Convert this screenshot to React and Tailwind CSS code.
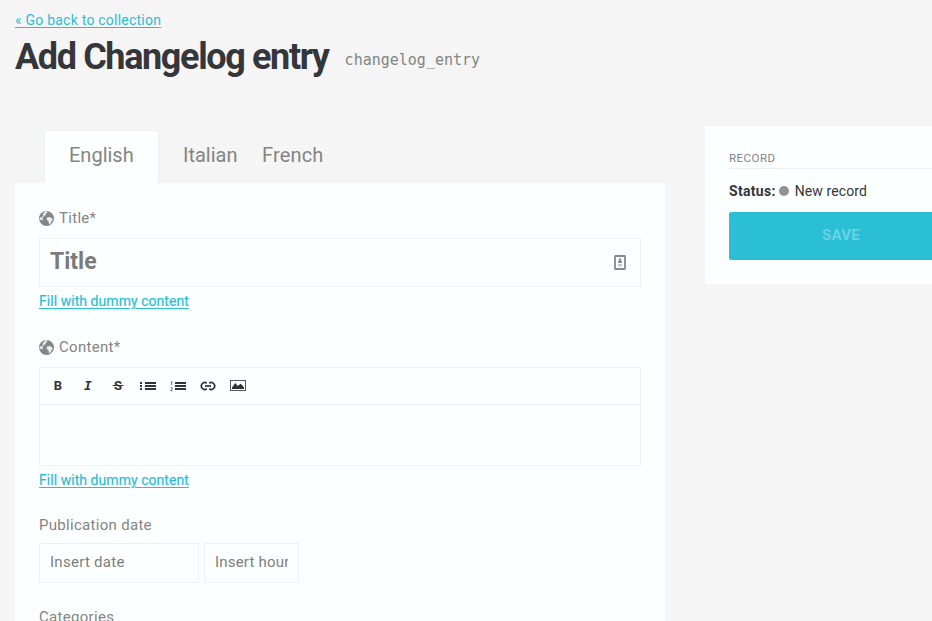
import React from "react";

const STROKE = "#2f3236";

function Globe() {
  return (
    <svg className="mr-[5px]" width="15" height="15" viewBox="0 0 15 15">
      <circle cx="7.5" cy="7.5" r="7.5" fill="#848689" />
      <path d="M5.2 0.9 L7.4 1.5 L6.6 2.6 L8.3 3.1 L7.2 4.6 L5.6 5 L5.2 6.3 L7.4 8 L7.1 9.7 L5.6 11.2 L5.1 13.9 L3.9 13.3 L3.6 10.4 L1.8 8.2 L1.6 5.4 L3.6 4 L4 2.4 Z" fill="#848689" />
      <path d="M6 0.5 L8.6 0.6 L8.2 1.8 L6.7 2.6 L6.9 3.9 L5 4.7 L4.4 6.3 L2.7 6.7 L4.1 8.1 L3.9 9.4 L2 8.5 L0.8 9.6 L0.6 7.5 L2.3 4.3 L4.6 2.5 Z" fill="#eef1f1" />
      <path d="M8.1 6.5 L11.2 5.9 L12.8 7.6 L13.9 8 L12.7 10.1 L11.6 12.6 L10.1 13.2 L9.5 10.2 L7.6 8.7 Z" fill="#eef1f1" />
      <path d="M1.2 4 L3.6 2.8 L4.2 4.4 L2.6 6.2 L0.8 6.6 Z" fill="#848689" />
    </svg>
  );
}

function ListIcon({ ordered }) {
  return (
    <svg width="16" height="11" viewBox="0 0 16 11" fill={STROKE} shapeRendering="crispEdges">
      {ordered ? (
        <g stroke={STROKE} strokeWidth="0.7" fill="none" shapeRendering="auto">
          <path d="M0.8 1.2 L1.8 0.6 V4" />
          <path d="M0.6 7 Q1.7 6 2.4 7 Q2.5 8 0.7 9.8 H2.6" />
        </g>
      ) : (
        <g>
          <rect x="0" y="1" width="2" height="2" />
          <rect x="0" y="4" width="2" height="2" />
          <rect x="0" y="7" width="2" height="2" />
        </g>
      )}
      <rect x="5" y="1" width="11" height="2" />
      <rect x="5" y="4" width="11" height="2" />
      <rect x="5" y="7" width="11" height="2" />
    </svg>
  );
}

function LinkIcon() {
  return (
    <svg width="16" height="10" viewBox="0 0 16 10" fill="none" stroke={STROKE} strokeWidth="1.7">
      <path d="M6.7 2.2 A3.4 3.4 0 1 0 6.7 7.8" />
      <path d="M9.3 2.2 A3.4 3.4 0 1 1 9.3 7.8" />
      <path d="M5 5 H11" />
    </svg>
  );
}

function ImageIcon() {
  return (
    <svg width="16" height="12" viewBox="0 0 16 12">
      <rect x="0.5" y="0.5" width="15" height="10" fill="none" stroke="#55585b" />
      <path d="M2 9 V7.5 L4.5 4 L5.5 3 L7.5 6 L9 5 L10.5 3.8 L12 5 L14 7.5 V9 Z" fill={STROKE} />
    </svg>
  );
}

function ContactIcon() {
  return (
    <svg width="12" height="15" viewBox="0 0 12 15">
      <rect x="1" y="1" width="10" height="13" rx="0.5" fill="none" stroke="#85878a" strokeWidth="1.8" />
      <circle cx="6" cy="4.4" r="1.2" fill="#85878a" />
      <path d="M4 7.8 V6.4 L5 5.4 H7 L8 6.4 V7.8 Z" fill="#75777a" />
      <rect x="4" y="9" width="4" height="2.4" fill="#c4c6c7" />
    </svg>
  );
}

function Label({ children, globe }) {
  return (
    <div className="flex h-5 items-center text-[15px] leading-5 text-[#848484]">
      {globe && <Globe />}
      <span className="tracking-[0.3px]">{children}</span>
    </div>
  );
}

function DummyLink() {
  return (
    <a className="block h-5 w-fit text-[14px] leading-5 tracking-[0.05px] whitespace-nowrap text-[#2bbed6] underline underline-offset-2 [-webkit-text-stroke:0.2px]">
      Fill with dummy content
    </a>
  );
}

export default function App() {
  return (
    <div className="flex h-[621px] w-[932px] flex-col overflow-hidden bg-[#f5f5f5] pl-[15px] font-['Roboto',sans-serif] text-[#34363a]">
      <a className="mt-[10px] block h-5 w-fit text-[14px] leading-5 tracking-[0.23px] whitespace-nowrap text-[#2bbed6] underline underline-offset-2">
        « Go back to collection
      </a>
      <div className="flex h-[54px] items-center">
        <h1 className="text-[36px] leading-[54px] font-bold tracking-[-1.37px] whitespace-nowrap">Add Changelog entry</h1>
        <span className="ml-4 pt-[7px] font-['DejaVu_Sans_Mono',monospace] text-[15px] text-[#848484]">changelog_entry</span>
      </div>
      <div className="mt-[42px] flex items-start">
        <main className="w-[650px] shrink-0 pt-[5px]">
          <div className="ml-[30px] flex h-[52px] text-[20px] leading-[49px] text-[#848484]">
            <div className="w-[113px] rounded-t-[2px] bg-[#fcffff] pl-6 shadow-[0_0_3px_rgba(0,0,0,0.05)]">English</div>
            <div className="ml-[25px] w-[79px]">Italian</div>
            <div className="tracking-[0.15px]">French</div>
          </div>
          <section className="relative h-[500px] rounded-[2px] bg-[#fcffff] px-6 pt-[25px]">
            <Label globe>Title*</Label>
            <div className="mt-[10px] flex h-[49px] w-[602px] items-center justify-between border border-[#eef0f0] pr-[14px] pl-[10px]">
              <span className="pb-[1px] text-[23px] font-bold text-[#7a7c7c]">Title</span>
              <ContactIcon />
            </div>
            <div className="mt-1"><DummyLink /></div>
            <div className="mt-[26px]"><Label globe>Content*</Label></div>
            <div className="mt-[10px] h-[99px] w-[602px] border border-[#eef0f0]">
              <div className="flex h-[37px] items-center border-b border-[#eef0f0] pl-[3px] text-[13px] font-bold text-[#2f3236]">
                <span className="w-[30px] text-center">B</span>
                <span className="w-[30px] text-center font-['DejaVu_Sans_Mono',monospace] italic">I</span>
                <span className="w-[30px] text-center"><span className="inline-block w-[11px] line-through">&#8202;S&#8202;</span></span>
                <span className="flex w-[30px] justify-center"><ListIcon /></span>
                <span className="flex w-[30px] justify-center"><ListIcon ordered /></span>
                <span className="flex w-[30px] justify-center"><LinkIcon /></span>
                <span className="flex w-[30px] justify-center"><ImageIcon /></span>
              </div>
            </div>
            <div className="mt-1"><DummyLink /></div>
            <div className="mt-[25px]"><Label>Publication date</Label></div>
            <div className="mt-2 flex gap-[5px] text-[15px] leading-[36px] text-[#7c7e7e]">
              <div className="h-10 w-[160px] border border-[#eef0f0] pl-[10px] tracking-[0.28px]">Insert date</div>
              <div className="h-10 w-[95px] border border-[#eef0f0] px-[10px]">
                <div className="overflow-hidden tracking-[0.2px] whitespace-nowrap">Insert hour</div>
              </div>
            </div>
            <div className="mt-6"><Label>Categories</Label></div>
          </section>
        </main>
        <aside className="ml-10 h-[158px] w-[272px] shrink-0 rounded-[2px] bg-[#fcffff] pt-6 pl-6">
          <div className="h-[19px] border-b border-[#eef0f0] text-[12px] leading-[17px] tracking-[0.5px] text-[#848484]"><span className="text-[11.5px]">RECORD</span></div>
          <div className="mt-3 flex h-5 items-center text-[14px] leading-5">
            <b className="tracking-[0.3px]">Status:</b>
            <span className="mr-[6px] ml-[3px] size-[10px] rounded-full bg-[#929292]" />
            <span className="tracking-[0.1px]">New record</span>
          </div>
          <div className="mt-[11px] flex h-12 w-[224px] items-center justify-center rounded-[2px] bg-[#2bbfd6] pb-[2px] text-[15px] font-bold tracking-[0.2px] text-[#68d2e2]">SAVE</div>
        </aside>
      </div>
    </div>
  );
}
